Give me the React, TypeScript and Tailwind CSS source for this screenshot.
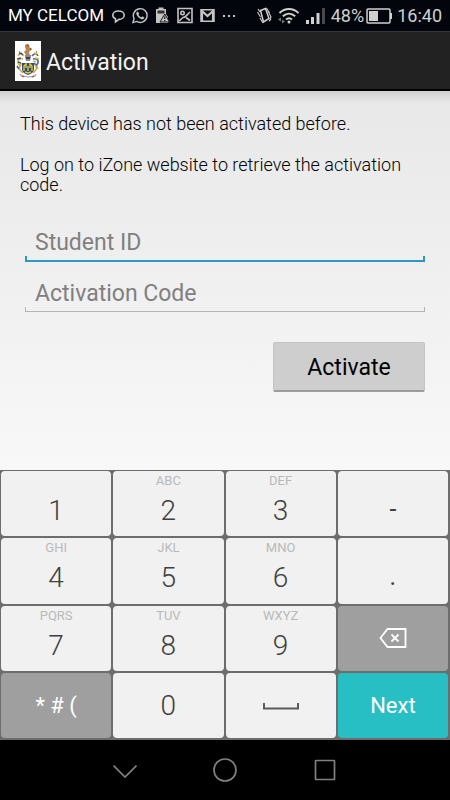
import React from "react";

const FONT = "font-[Roboto,'Noto_Sans',sans-serif]";

function Crest() {
  return (
    <svg viewBox="0 0 26 40" className="h-10 w-[26px] bg-white" aria-hidden="true">
      <path d="M10 4l2-1 2 1 1 3 2 1-2 1-1 3 1 2h-4l-2-3 2-2-1-3z" fill="#b8864a" />
      <path d="M12 3l2 1-1 2zM15 7l2 1-2 2z" fill="#7a4b26" />
      <path d="M10 14h6v2l-1 4h-4l-1-4z" fill="#8a8c93" />
      <path d="M11 16h4v2h-4z" fill="#3e4049" />
      <path d="M9 15c-3-3-5-3-6 0M8 18c-3-1-6 1-5 4l2 3M7 22l-3 3" stroke="#e6b838" strokeWidth="1.600" fill="none" />
      <path d="M17 15c2-3 5-3 6 0M18 18c3-1 6 1 5 4l-2 3M19 22l3 3" stroke="#3f66a5" strokeWidth="1.600" fill="none" />
      <path d="M4 13l2-1 2 2M2 18l4-1M3 21l3 1M2 25l2 3" stroke="#31548f" strokeWidth="1.400" fill="none" />
      <path d="M19 12l3 1M20 17l4 1M18 20l3 1M22 25l1 3" stroke="#e3b229" strokeWidth="1.500" fill="none" />
      <path d="M6 24c-2 2-2 4 0 6l2 2M20 24c2 2 2 4 0 6l-2 2" stroke="#d7a32f" strokeWidth="1.500" fill="none" />
      <path d="M7 22h12v6c0 3-3 5-6 6-3-1-6-3-6-6z" fill="#244c86" />
      <path d="M9 30v-5l2-2v4M13 30v-5M15 27v-4l2 2v5M10 31l3 1 3-1" stroke="#edc52d" strokeWidth="1.400" fill="none" />
      <path d="M5 33c1 3 5 2 8 3 3-1 7 1 8-3" stroke="#a5a7ae" strokeWidth="1.300" fill="none" />
      <path d="M7 35l2 1M17 36l2-1M4 11h1M21 11h1" stroke="#bd4540" strokeWidth="1.300" />
    </svg>
  );
}

function NotificationIcons() {
  return (
    <div className="flex items-center gap-[7px] text-[#c4c4c4]" aria-hidden="true">
      <svg width="13" height="16" viewBox="0 0 13 16" fill="none" stroke="currentColor" strokeWidth="1.600">
        <path d="M3.500 10.700C1.800 10 .8 8.600.8 7.200c0-2.500 2.500-4.200 5.700-4.200s5.700 1.700 5.700 4.200-2.500 4.200-5.200 4.200L3.500 14z" />
      </svg>
      <svg width="16" height="17" viewBox="0 0 17 17">
        <path d="M1 16l1.200-4.200A7.300 7.300 0 1 1 5 14.800z" fill="none" stroke="currentColor" strokeWidth="1.500" />
        <path d="M6.200 4.200l1.500 2.500-.9 1.100c.7 1.300 1.700 2.100 2.900 2.700l1.200-1.200 2.200 1.300c-.2 1.600-1.600 2.300-3.100 1.800C7.300 11.500 5.200 9.300 4.600 7c-.3-1.300.4-2.600 1.600-2.800z" fill="currentColor" />
      </svg>
      <svg width="15" height="17" viewBox="0 0 15 17">
        <path d="M1 2h2.500V.500h5V2H11v5l2 3v6H1z" fill="currentColor" />
        <path d="M2.500 3.500h7v3h-7z" fill="#303236" />
        <path d="M9.800 7L14.500 15h-9.500z" fill="currentColor" stroke="#111418" />
        <path d="M9.800 9.500v2.500M9.800 13v1.300" stroke="#111418" strokeWidth="1.200" />
      </svg>
      <svg width="16" height="17" viewBox="0 0 16 17" fill="none" stroke="currentColor" strokeWidth="1.600">
        <path d="M1 1.500h14v14H1z" />
        <circle cx="5.500" cy="6" r="1.700" />
        <path d="M2 14l4-3.500c3 0 4-3 7-5.500M9 10.500l4 3" />
      </svg>
      <svg width="15" height="13" viewBox="0 0 15 13">
        <path d="M1 .800h13v11.400H1z" fill="none" stroke="currentColor" strokeWidth="1.500" />
        <path d="M2 12V2l5.500 5L13 2v10" fill="none" stroke="currentColor" strokeWidth="2.200" />
      </svg>
      <svg width="14" height="4" viewBox="0 0 14 4" fill="currentColor">
        <path d="M1 1h2v2H1zM6 1h2v2H6zM11 1h2v2h-2z" />
      </svg>
    </div>
  );
}

function StatusBar() {
  return (
    <div className="flex h-[31px] items-center justify-between bg-[#02060c] px-2 text-[18px] whitespace-nowrap text-[#d0d0d0]">
      <div className="flex items-center gap-2">
        <span className="text-[17px] text-white">MY CELCOM</span>
        <NotificationIcons />
      </div>
      <div className="flex items-center gap-[6px]">
        <svg width="15" height="17" viewBox="0 0 15 17" fill="none" stroke="currentColor" aria-hidden="true">
          <path d="M3.500 3.500l5-2 3.500 10-5.500 3.500z" strokeWidth="1.500" />
          <path d="M1 2l2 3M.500 5l3 5M3 11l3 5M9.500 1l3 5M11 4l3 6-1 2M14 12l-2 2" strokeWidth="1.100" />
        </svg>
        <svg width="22" height="17" viewBox="0 0 22 17" fill="none" stroke="currentColor" strokeWidth="2" aria-hidden="true">
          <path d="M1.500 6c5.500-5.300 13.500-5.300 19 0M4.800 9.300c3.800-3.500 8.600-3.500 12.400 0M8 12.500c2-1.700 4-1.700 6 0" />
          <circle cx="11" cy="15" r="1.500" fill="currentColor" stroke="none" />
          <path d="M0 12.500l3-2v4zM7 14.500l-3-2v4z" fill="#777" stroke="none" />
        </svg>
        <svg width="19" height="16" viewBox="0 0 19 16" fill="currentColor" aria-hidden="true">
          <path d="M0 12h3v4H0zM5 9h3v7H5zM10.500 5h3v11h-3z" />
          <path d="M16 0h3v16h-3z" fill="#45484d" />
        </svg>
        <div className="flex items-center gap-1">
          <div className="flex items-center gap-[2px]">
            <span>48%</span>
            <svg width="27" height="16" viewBox="0 0 27 16" aria-hidden="true">
              <rect x="1" y="1" width="23" height="14" rx="1" fill="none" stroke="currentColor" strokeWidth="1.500" />
              <path d="M3 3h9v10H3zM24 5h2v6h-2z" fill="currentColor" />
            </svg>
          </div>
          <span>16:40</span>
        </div>
      </div>
    </div>
  );
}

function Field({ id, label, focused }: { id: string; label: string; focused?: boolean }) {
  return (
    <div className="flex flex-col">
      <input
        id={id}
        aria-label={label}
        placeholder={label}
        className="h-9 w-full bg-transparent px-[10px] text-[23px] leading-9 text-black outline-none placeholder:text-[#808080] placeholder:opacity-100"
      />
      <div
        className={
          focused
            ? "pointer-events-none -mt-[5px] h-[6px] border-x-2 border-b-2 border-[#2f96c5]"
            : "pointer-events-none -mt-[5px] h-[5px] border-x border-b border-[#b4b4b4]"
        }
      />
    </div>
  );
}

type KeyDef = { main: React.ReactNode; sub?: string; name?: string; kind?: "symbol" | "plain" | "gray" | "next" };

const keys: KeyDef[] = [
  { main: "1" },
  { main: "2", sub: "ABC" },
  { main: "3", sub: "DEF" },
  { main: "-", kind: "symbol" },
  { main: "4", sub: "GHI" },
  { main: "5", sub: "JKL" },
  { main: "6", sub: "MNO" },
  { main: ".", kind: "symbol" },
  { main: "7", sub: "PQRS" },
  { main: "8", sub: "TUV" },
  { main: "9", sub: "WXYZ" },
  {
    kind: "gray",
    name: "Delete",
    main: (
      <svg width="28" height="20" viewBox="0 0 28 20" fill="none" stroke="white" strokeWidth="1.800" aria-hidden="true">
        <path d="M8.500 1H26.500v18H8.500L1.500 10z" />
        <path d="M12.500 6.500l7 7M19.500 6.500l-7 7" />
      </svg>
    ),
  },
  { main: "* # (", kind: "gray" },
  { main: "0", kind: "plain" },
  {
    kind: "plain",
    name: "Space",
    main: (
      <svg width="36" height="8" viewBox="0 0 36 8" fill="none" stroke="#5a5a5a" strokeWidth="2" aria-hidden="true">
        <path d="M1 1v5.500h34V1" />
      </svg>
    ),
  },
  { main: "Next", kind: "next" },
];

function Key({ def }: { def: KeyDef }) {
  const base = "flex flex-col items-center rounded-[4px]";
  if (def.kind === "gray" || def.kind === "next") {
    return (
      <button
        type="button"
        aria-label={def.name}
        className={`${base} justify-center text-[22px] text-white ${def.kind === "next" ? "bg-[#28bfc4]" : "bg-[#9f9f9f]"}`}
      >
        {def.main}
      </button>
    );
  }
  if (def.kind) {
    return (
      <button
        type="button"
        aria-label={def.name}
        className={`${base} justify-center bg-[#f1f1f1] text-[#404040] ${def.kind === "symbol" ? "pt-3 text-[25px]" : "pt-[2px] text-[28px] font-light"}`}
      >
        {def.main}
      </button>
    );
  }
  return (
    <button type="button" className={`${base} bg-[#f1f1f1] pt-[2px] text-[#404040]`}>
      <span className="h-4 text-[13px] leading-4 text-[#b9b9b9]">{def.sub}</span>
      <span className="pt-2 text-[28px] leading-7 font-light">{def.main}</span>
    </button>
  );
}

export default function App() {
  return (
    <div className={`flex min-h-screen flex-col ${FONT}`}>
      <StatusBar />
      <header className="flex h-[60px] items-center gap-[5px] border-t border-b-2 border-t-[#34383b] border-b-black bg-[#222222] px-[15px]">
        <Crest />
        <h1 className="pt-1 text-[23px] leading-7 text-[#f3f3f3]">Activation</h1>
      </header>
      <main className="flex-1 bg-linear-to-b from-[#e8e8e8] to-[#f8f8f8]">
        <div className="h-3 bg-linear-to-b from-[#cfcfcf] to-transparent" />
        <div className="px-5 pt-[11px] text-[18px] leading-5 font-light text-black">
          <p>This device has not been activated before.</p>
          <p className="pt-[21px]">Log on to iZone website to retrieve the activation code.</p>
        </div>
        <form className="flex flex-col px-[25px] pt-[30px]" onSubmit={(e) => e.preventDefault()}>
          <Field id="student-id" label="Student ID" focused />
          <div className="pt-[14px]">
            <Field id="activation-code" label="Activation Code" />
          </div>
          <button
            type="submit"
            className="mt-[30px] h-[50px] w-[152px] self-end rounded-[2px] border border-b-2 border-[#c4c4c4] border-b-[#9c9c9c] bg-[#cecece] pt-1 text-[23px] text-black"
          >
            Activate
          </button>
        </form>
      </main>
      <section aria-label="Keyboard" className="grid h-[270px] grid-cols-4 grid-rows-4 gap-[2px] bg-[#6d6d6d] pt-px pr-[2px] pb-[2px] pl-px">
        {keys.map((def, i) => (
          <Key key={i} def={def} />
        ))}
      </section>
      <nav className="flex h-[60px] items-center justify-center gap-[76px] bg-black">
        <button type="button" aria-label="Hide keyboard">
          <svg width="24" height="24" viewBox="0 0 24 24" fill="none" stroke="#808080" strokeWidth="1.700">
            <path d="M.500 7.500L12 19 23.500 7.500" />
          </svg>
        </button>
        <button type="button" aria-label="Home">
          <svg width="24" height="24" viewBox="0 0 24 24" fill="none" stroke="#808080" strokeWidth="1.700">
            <circle cx="12" cy="12" r="11" />
          </svg>
        </button>
        <button type="button" aria-label="Recent apps">
          <svg width="24" height="24" viewBox="0 0 24 24" fill="none" stroke="#808080" strokeWidth="1.700">
            <rect x="2.500" y="2.500" width="19" height="19" rx=".5" />
          </svg>
        </button>
      </nav>
    </div>
  );
}
